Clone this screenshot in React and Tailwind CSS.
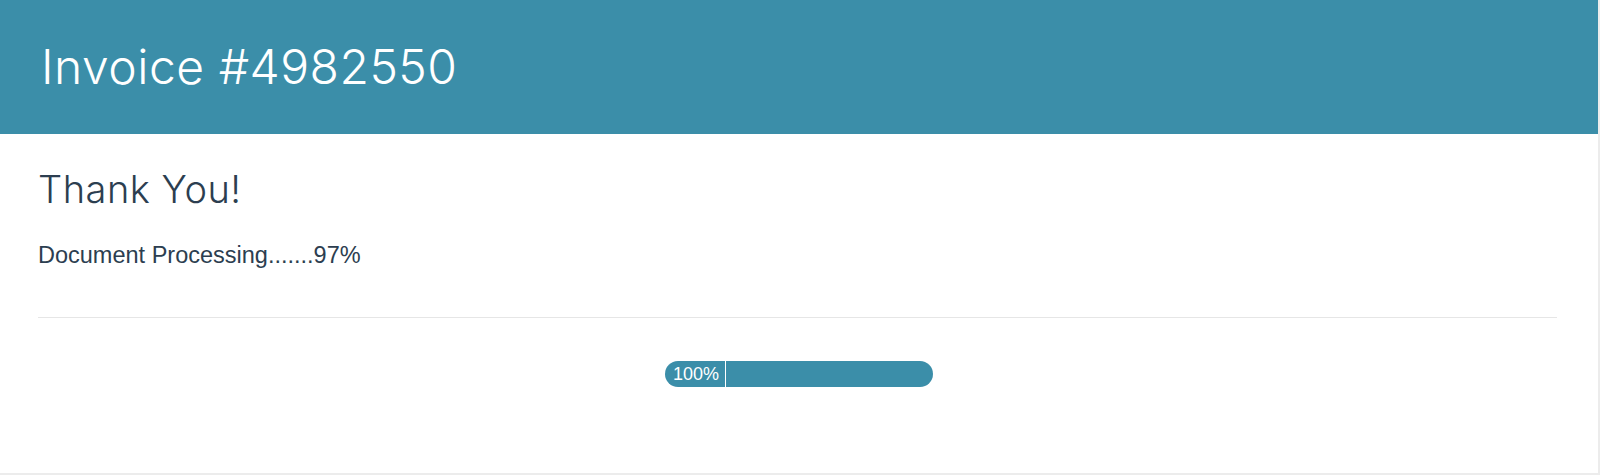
export default function App() {
  return (
    <div className="w-[1600px] h-[475px] bg-[#ececec]">
      <div className="w-[1598px] h-[473px] bg-white flex flex-col">
        <div className="h-[134px] bg-[#3b8ea9] flex items-center pl-[41px] pr-[38px]">
          <h1 className="text-white text-[48px] font-light leading-none tracking-[0.5px]" style={{ fontFamily: 'Inter, "Open Sans", sans-serif' }}>
            Invoice #4982550
          </h1>
        </div>
        <div className="px-[38px] flex flex-col">
          <h2 className="mt-[36px] text-[#2c3e50] text-[38px] font-light leading-none tracking-[0.5px]" style={{ fontFamily: 'Inter, "Open Sans", sans-serif' }}>
            Thank You!
          </h2>
          <p className="mt-[36px] text-[#2c3e50] text-[23.5px] leading-none" style={{ fontFamily: '"Liberation Sans", Arial, sans-serif' }}>
            Document Processing.......97%
          </p>
          <div className="mt-[49px] w-[1519px] h-px bg-[#e6e6e6]" />
          <div className="flex justify-center pt-[43px]">
            <div className="w-[268px] h-[26px] rounded-full bg-[#3b8ea9] flex items-stretch overflow-hidden">
              <div className="w-[61px] border-r border-white flex items-center justify-center pl-[2px] text-white text-[18px] leading-none" style={{ fontFamily: '"Liberation Sans", Arial, sans-serif' }}>
                100%
              </div>
            </div>
          </div>
        </div>
      </div>
    </div>
  );
}
